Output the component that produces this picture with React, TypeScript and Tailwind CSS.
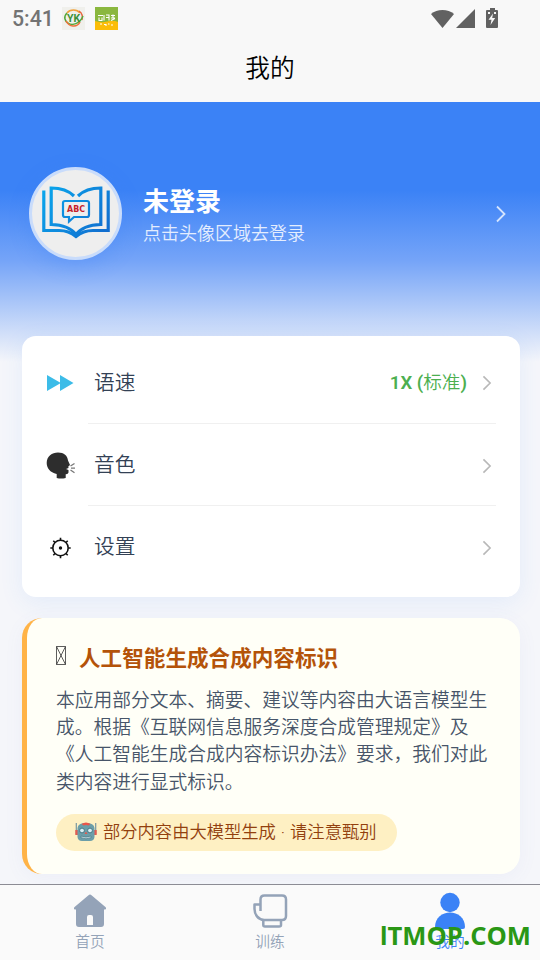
import type { ReactNode } from 'react'

interface MenuItem {
  label: string
  icon: ReactNode
  value?: string
}

function AppBadgeYK() {
  return (
    <svg width="23" height="23" viewBox="0 0 23 23" fill="none">
      <rect width="23" height="23" fill="#f0f0ec" />
      <path d="M5 6C8 2 15 2 18 6" stroke="#f0a13c" strokeWidth="1.6" />
      <path d="M17 4C20 6 21 9 20 13" stroke="#e8643c" strokeWidth="1.4" />
      <path d="M5 6C1 10 3 14 6 16C10 19 18 17 21 9" stroke="#55a83c" strokeWidth="1.5" />
      <path d="M4 14C7 20 15 21 18 15" stroke="#ee7139" strokeWidth="1.6" />
      <text x="11.5" y="15" textAnchor="middle" fontSize="10.5" fontWeight="700" fill="#3d9137" fontFamily="Roboto, sans-serif">YK</text>
    </svg>
  )
}

function AppBadgeGreen() {
  return (
    <svg width="23" height="23" viewBox="0 0 23 23">
      <rect width="23" height="23" fill="#8ab73e" />
      <path d="M0 14Q6 16 12 14.5T23 15V23H0Z" fill="#fbbd08" />
      <g stroke="#fff" strokeWidth="1.1" fill="none">
        <path d="M3 8.5h5M4 10.5v3h3v-3M9 8v5.5M11 8h3v5.5M11 10.5h3M16 8.5h4M16 11h4M18 7.5v3M16 13.5l4-2" />
        <path d="M5 17h2M9 17.5h2v1.5M13 17h1.5M16 18h2" />
      </g>
    </svg>
  )
}

function StatusIcons() {
  return (
    <svg width="68" height="22" viewBox="0 0 68 22" fill="#616161">
      <path d="M1 6C7 .7 18 .7 24 6L12.5 20Z" />
      <path d="M45 1V20H26Z" />
      <path fillRule="evenodd" d="M60 0h5v2h2q1 0 1 1v16q0 1-1 1H57q-1 0-1-1V3q0-1 1-1h3ZM58 4v2h2V4ZM64 4v2h2V4ZM63 5.5l-4.5 6.2h3L60.5 17l4.7-7h-3Z" />
    </svg>
  )
}

function BookLogo() {
  return (
    <svg width="68" height="54" viewBox="0 0 68 54" fill="none">
      <defs>
        <linearGradient id="book" x1="0" y1="0" x2="68" y2="54" gradientUnits="userSpaceOnUse">
          <stop stopColor="#0aa9ed" />
          <stop offset="1" stopColor="#1268cc" />
        </linearGradient>
      </defs>
      <g stroke="url(#book)">
        <path d="M1.8 5.5V45.500H17Q27 45.500 34 51.500Q41 45.500 51 45.500H66.200V5.500" strokeWidth="3.2" />
        <path d="M32 11Q24 3 9.200 3V39.500Q27 40 34 49.500Q41 40 58.800 39.500V3Q44 3 36 11" strokeWidth="3.2" />
        <path d="M23 16H45Q47 16 47 18V30Q47 32 45 32H32L27 36.500V32H23Q21 32 21 30V18Q21 16 23 16Z" strokeWidth="2.2" />
      </g>
      <text x="34" y="27" textAnchor="middle" fontSize="8.5" fontWeight="700" fill="#c61f2b" fontFamily="DejaVu Sans, sans-serif" textLength="18" lengthAdjust="spacingAndGlyphs">ABC</text>
    </svg>
  )
}

function Chevron({ className }: { className: string }) {
  return (
    <svg viewBox="0 0 10 18" fill="none" stroke="currentColor" strokeWidth="1.8" className={className}>
      <path d="M1 1.500L8.500 9L1 16.500" />
    </svg>
  )
}

function FastForward() {
  return (
    <svg width="28" height="18" viewBox="0 0 28 18" fill="#3cbce8">
      <path d="M0 0L13 7.500V0L26.500 8L13 16V8.500L0 16Z" />
    </svg>
  )
}

function SpeakingHead() {
  return (
    <svg width="30" height="28" viewBox="0 0 30 28">
      <path d="M12 .5C18 .5 21.500 3.500 22 8.500L24 13L22.300 14.500L22.500 16L20 17L22.500 18V20.500Q22 22.500 19.700 22.300V26Q15 27.200 10.700 26V22C4 20.500 .7 16 .7 11C.7 4.500 6 .5 12 .5Z" fill="#2d2d2d" />
      <path d="M24.500 14L28.500 11.500M25 16.200H29M24.500 18L28.500 20.700" stroke="#777" strokeWidth="1.3" />
    </svg>
  )
}

function Gear() {
  return (
    <svg width="22" height="22" viewBox="0 0 22 22" fill="none" stroke="#111" strokeWidth="1.6">
      <circle cx="10.500" cy="11" r="7.700" />
      <circle cx="10.500" cy="11" r="1.700" fill="#111" stroke="none" />
      <path d="M10.500 3V.8M10.500 19v2.200M2.500 11H.3M18.500 11h2.200M5 5.500L3.300 3.800M16 5.500l1.700-1.700M5 16.500l-1.700 1.700M16 16.500l1.700 1.700" />
    </svg>
  )
}

function Robot() {
  return (
    <svg width="22" height="20" viewBox="0 0 22 20">
      <path d="M1.300 1V12M20.700 1V12" stroke="#7897a0" strokeWidth="1.200" />
      <path d="M.3 8H3v5H.3ZM19 8h2.700v5H19Z" fill="#e35b50" />
      <path d="M2.500 6Q3 1 11 1T19.500 6V15Q19 19 15 19H7Q3 19 2.500 15Z" fill="#6b9ea9" />
      <path d="M6.500 2Q11-1 15.500 2L13.500 3.500Q11 2.500 8.500 3.500Z" fill="#eb5549" />
      <circle cx="7" cy="8.500" r="2.400" fill="#d9eff3" stroke="#477785" />
      <circle cx="15" cy="8.500" r="2.400" fill="#d9eff3" stroke="#477785" />
      <path d="M11 9.500L12.500 12H9.500Z" fill="#e35b50" />
      <path d="M6 14q5 2 10 0v1.800q-5 2-10 0Z" fill="#b9d3d8" stroke="#477785" strokeWidth=".6" />
    </svg>
  )
}

function HomeIcon() {
  return (
    <svg width="34" height="34" viewBox="0 0 34 34" fill="#94a3b8">
      <path fillRule="evenodd" d="M15.500 1.200Q17 0 18.500 1.200L32.700 13.200Q34 15.500 31 15.500V30Q31 33 28 33H6Q3 33 3 30V15.500Q0 15.500 1.300 13.200ZM14 31h6v-8q0-2-2-2h-2q-2 0-2 2Z" />
    </svg>
  )
}

function GloveIcon() {
  return (
    <svg width="35" height="34" viewBox="0 0 35 34" fill="none" stroke="#94a3b8" strokeWidth="2.5" strokeLinejoin="round">
      <path d="M7.500 17V5.500Q7.500 1.500 11.500 1.500H29Q33 1.500 33 5.500V22Q33 26 29 26H11C5 25.500 1.500 20.500 1.500 15V10.500H7.500" />
      <path d="M10.300 26V31Q10.300 32.500 12 32.500H26Q28 32.500 28 31V26" />
    </svg>
  )
}

function ProfileIcon() {
  return (
    <svg width="32" height="38" viewBox="0 0 32 38" fill="#3b82f6">
      <circle cx="16" cy="10.500" r="9.700" />
      <path d="M1 35C1 15.500 31 15.500 31 35Q31 37 29 37H3Q1 37 1 35Z" />
    </svg>
  )
}

const MENU: MenuItem[] = [
  { label: '语速', icon: <FastForward />, value: '1X (标准)' },
  { label: '音色', icon: <SpeakingHead /> },
  { label: '设置', icon: <Gear /> },
]

const NOTICE = [
  '本应用部分文本、摘要、建议等内容由大语言模型生',
  '成。根据《互联网信息服务深度合成管理规定》及',
  '《人工智能生成合成内容标识办法》要求，我们对此',
  '类内容进行显式标识。',
]

const TABS = [
  { label: '首页', icon: <HomeIcon />, active: false },
  { label: '训练', icon: <GloveIcon />, active: false },
  { label: '我的', icon: <ProfileIcon />, active: true },
]

export default function App() {
  return (
    <div className="relative flex h-[960px] w-[540px] flex-col overflow-hidden bg-[#f5f6fa] font-['Roboto','Noto_Sans_CJK_SC',sans-serif] font-[350]">
      <header className="h-[102px] shrink-0 bg-[#f8f8f8]">
        <div className="flex h-[37px] items-center justify-between pr-[42px] pl-3">
          <div className="flex items-center">
            <span className="w-[50px] text-[21.3px] leading-[37px] font-medium text-[#737373]">5:41</span>
            <AppBadgeYK />
            <span className="w-[10px]" />
            <AppBadgeGreen />
          </div>
          <StatusIcons />
        </div>
        <h1 className="pt-px text-center text-[24.7px] leading-[61px] font-[350] text-black">我的</h1>
      </header>

      <main className="min-h-0 flex-1">
        <section className="h-[260px] bg-[linear-gradient(180deg,#3b82f6_0%,#3b82f6_34%,#75a4f8_61%,#adc8f8_78%,#f5f6fa_100%)] pt-[65px] pr-[34px] pl-[29px]">
          <div className="flex items-center">
            <div className="flex size-[93px] items-center justify-center rounded-full border-[3px] border-[#c9dcfb] bg-[#eeeeee] pb-[3px] shadow-[0_6px_20px_rgba(59,130,246,0.3)]">
              <BookLogo />
            </div>
            <div className="ml-[21px] flex-1 pt-[5px]">
              <p className="text-[26px] leading-[34px] font-bold text-white">未登录</p>
              <p className="text-[18px] leading-[29px] text-[#e4edfe]">点击头像区域去登录</p>
            </div>
            <Chevron className="h-[18px] w-[10px] text-[#d5e4fd]" />
          </div>
        </section>

        <section className="-mt-[26px] mr-5 ml-[22px] h-[261px] rounded-[14px] bg-white px-6 py-[6px] shadow-[0_6px_24px_rgba(59,130,246,0.09)]">
          {MENU.map((item, i) => (
            <div key={item.label} className="flex h-[82px]">
              <div className="flex w-[42px] items-center pt-[2px]">
                <span className="flex w-[30px] justify-center">{item.icon}</span>
              </div>
              <div className={`flex flex-1 items-center justify-between pt-[2px] pr-1 pl-[6px] ${i < MENU.length - 1 ? 'border-b border-[#f0f0f0]' : ''}`}>
                <span className="text-[20.7px] text-[#334155]">{item.label}</span>
                <span className="flex items-center">
                  {item.value && (
                    <span className="mr-[15px] text-[18.6px] text-[#4caf50]">
                      <span className="font-semibold">1X (</span>标准<span className="font-semibold">)</span>
                    </span>
                  )}
                  <Chevron className="h-[16px] w-[10px] text-[#b8b8b8]" />
                </span>
              </div>
            </div>
          ))}
        </section>

        <section className="mt-[21px] mr-5 ml-[22px] h-[256px] rounded-[20px] border-l-[5px] border-[#ffb347] bg-[#fffff7] pt-6 pl-[29px] shadow-[0_4px_20px_rgba(100,120,200,0.06)]">
          <div className="flex items-center">
            <svg width="10" height="20" viewBox="0 0 10 20" fill="none" stroke="#333" strokeWidth=".8" className="mr-[13px] mb-[5px]">
              <path d="M.5 .5h9v18h-9ZM.5 .5l9 18M9.500 .5l-9 18" />
            </svg>
            <h2 className="text-[21.6px] leading-[33px] font-bold text-[#b45309]">人工智能生成合成内容标识</h2>
          </div>
          <div className="mt-[13px] text-[18.75px] leading-[27.2px] whitespace-nowrap text-[#475569]">
            {NOTICE.map((line) => (
              <p key={line}>{line}</p>
            ))}
          </div>
          <div className="mt-[17px] flex h-[37px] w-[341px] items-center rounded-full bg-[#fef0c3] pl-[19px]">
            <Robot />
            <span className="ml-[6px] pt-px text-[17.3px] [word-spacing:0.8px] whitespace-nowrap text-[#92400e]">部分内容由大模型生成 · 请注意甄别</span>
          </div>
        </section>
      </main>

      <nav className="flex h-[76px] shrink-0 border-t border-[#8c8c94] bg-[#fafafa]">
        {TABS.map((tab) => (
          <div key={tab.label} className="flex flex-1 flex-col items-center pt-[7px]">
            <span className="flex h-[38px] items-center justify-center">{tab.icon}</span>
            <span className={`pt-px text-[14.7px] leading-[22px] ${tab.active ? 'text-[#3b82f6]' : 'text-[#94a3b8]'}`}>{tab.label}</span>
          </div>
        ))}
      </nav>

      <span className="absolute right-[9px] bottom-[6px] font-['Open_Sans',sans-serif] text-[25.6px] leading-[36px] font-bold text-[#2a9715]">
        <span className="font-['Roboto',sans-serif]">I</span>TMOP.COM
      </span>
    </div>
  )
}
